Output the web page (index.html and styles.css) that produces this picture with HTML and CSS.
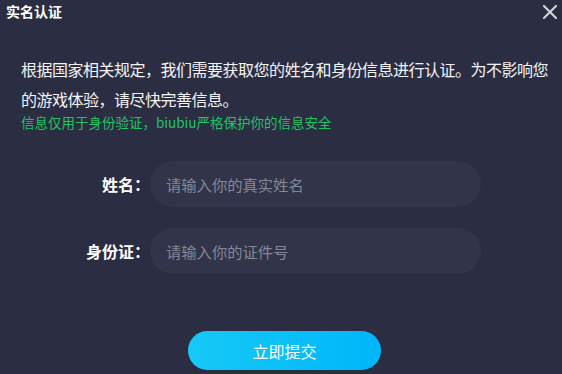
FILE: index.html
```html
<!DOCTYPE html>
<html lang="zh-CN">
<head>
<meta charset="utf-8">
<link rel="stylesheet" href="styles.css">
</head>
<body>
<div class="dialog">
  <div class="header">
    <div class="title">实名认证</div>
    <svg class="close" width="14" height="14" viewBox="0 0 14 14"><path d="M1 1 L13 13 M13 1 L1 13" stroke="#d6d7de" stroke-width="2" stroke-linecap="square"/></svg>
  </div>
  <div class="intro">
    <p class="desc">根据国家相关规定，我们需要获取您的姓名和身份信息进行认证。为不影响您的游戏体验，请尽快完善信息。</p>
    <p class="note">信息仅用于身份验证，biubiu严格保护你的信息安全</p>
  </div>
  <div class="form">
    <div class="row">
      <label class="label">姓名：</label>
      <div class="input">请输入你的真实姓名</div>
    </div>
    <div class="row">
      <label class="label">身份证：</label>
      <div class="input">请输入你的证件号</div>
    </div>
  </div>
  <div class="actions">
    <button class="submit">立即提交</button>
  </div>
</div>
</body>
</html>
```
FILE: styles.css
```css
html, body {
  margin: 0;
  padding: 0;
  background: #2b2d42;
}
.dialog {
  width: 562px;
  height: 374px;
  background: #2b2d42;
  font-family: "Noto Sans CJK SC", "Noto Sans", sans-serif;
  color: #fff;
  overflow: hidden;
}
.header {
  display: flex;
  justify-content: space-between;
  align-items: flex-start;
  padding: 1px 5px 0 6px;
  height: 54px;
  box-sizing: border-box;
}
.title {
  font-size: 14px;
  font-weight: bold;
  line-height: 20px;
}
.close {
  margin-top: 4px;
}
.intro {
  padding-left: 21px;
}
.desc {
  margin: 0;
  width: 541px;
  font-size: 16px;
  line-height: 30px;
  letter-spacing: -0.5px;
  color: #f4f4f6;
}
.note {
  margin: 0;
  font-size: 13.5px;
  line-height: 16px;
  color: #1fc463;
}
.form {
  margin-top: 31px;
  display: flex;
  flex-direction: column;
  gap: 21px;
}
.row {
  display: flex;
  align-items: center;
}
.label {
  width: 150px;
  text-align: right;
  font-size: 16px;
  font-weight: bold;
}
.input {
  width: 331px;
  height: 46px;
  border-radius: 23px;
  background: #323449;
  box-sizing: border-box;
  padding-left: 16px;
  line-height: 46px;
  font-size: 15.3px;
  color: #858797;
}
.actions {
  margin-top: 57px;
  padding-left: 188px;
}
.submit {
  width: 193px;
  height: 39px;
  border: none;
  border-radius: 20px;
  background: linear-gradient(90deg, #16c9f6, #00b6f9);
  color: #fff;
  font-family: "Noto Sans CJK SC", "Noto Sans", sans-serif;
  font-size: 16px;
  padding: 0;
}
```
